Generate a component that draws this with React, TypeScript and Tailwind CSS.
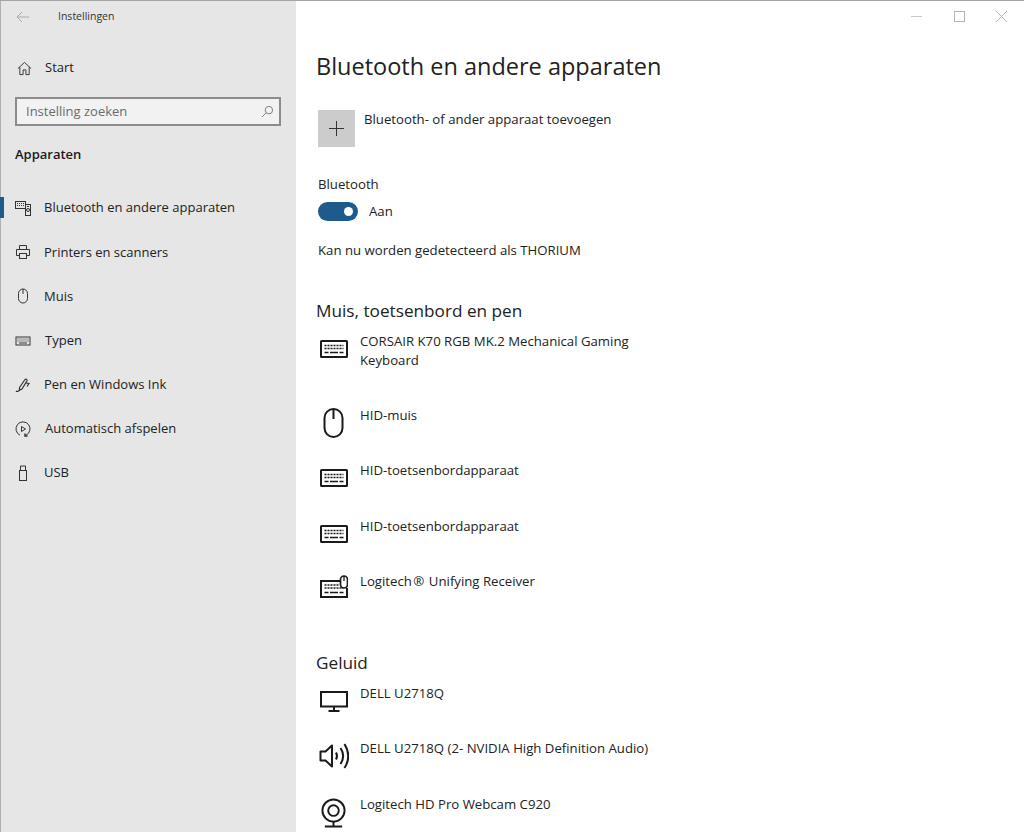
import React from "react";

const font = "font-['Open_Sans',sans-serif]";

type IconProps = { className?: string };

const Keyboard = ({ className = "w-[28px] h-[18px] mt-[4px]" }: IconProps) => (
  <svg viewBox="0 0 28 18" className={className} fill="none" stroke="#1a1a1a">
    <rect x="1" y="1" width="26" height="16" rx="0.500" strokeWidth="2" />
    <path d="M4.500 5.500h19M4.500 8.500h19" strokeWidth="1.600" strokeDasharray="2 1" />
    <path d="M4.500 12.500h4M10 12.500h8M19.500 12.500h4" strokeWidth="1.600" />
  </svg>
);

const KeyboardMouse = () => (
  <svg viewBox="0 0 28 23" className="w-[28px] h-[23px] -mt-px" fill="none" stroke="#1a1a1a">
    <path d="M20 6H1v16h26V13" strokeWidth="2" />
    <path d="M4.500 10h14M4.500 13h19" strokeWidth="1.600" strokeDasharray="2 1" />
    <path d="M4.500 17.500h4M10 17.500h8M19.500 17.500h4" strokeWidth="1.600" />
    <rect x="20.500" y="1" width="7" height="12" rx="3.500" fill="white" strokeWidth="1.700" />
    <path d="M24 1v5" strokeWidth="1.300" />
  </svg>
);

const Mouse = ({ className = "w-[21px] h-[30px] -mt-[2px]" }: IconProps) => (
  <svg viewBox="0 0 21 30" className={className} fill="none" stroke="#1a1a1a" strokeWidth="2">
    <rect x="1.500" y="1" width="18" height="28" rx="9" />
    <path d="M10.500 1v10" />
  </svg>
);

const Monitor = () => (
  <svg viewBox="0 0 28 21" className="w-[28px] h-[21px] mt-[3px]" fill="none" stroke="#1a1a1a" strokeWidth="2">
    <rect x="1" y="1" width="26" height="14.500" />
    <path d="M14 15.500v4.500M8.500 20h11" />
  </svg>
);

const Speaker = () => (
  <svg viewBox="0 0 30 26" className="w-[30px] h-[26px]" fill="none" stroke="#1a1a1a" strokeWidth="2">
    <path d="M1.500 8.500h5l6.500-6v21l-6.500-6h-5z" strokeLinejoin="round" />
    <path d="M17 9.500c1.300 2.300 1.300 4.700 0 7" />
    <path d="M21.500 5c3.300 5 3.300 11 0 16" />
    <path d="M25.500 1c5 8 5 16 0 24" />
  </svg>
);

const Webcam = () => (
  <svg viewBox="0 0 28 30" className="w-[27px] h-[30px] -mt-px" fill="none" stroke="#1a1a1a" strokeWidth="2">
    <circle cx="14" cy="12.500" r="11.500" />
    <circle cx="14" cy="12.500" r="5.500" />
    <path d="M14 24v5M5 29h18" />
  </svg>
);

const navIcons: React.ReactNode[] = [
  <svg key="bt" viewBox="0 0 16 16" className="w-4 h-4" fill="none" stroke="#333" strokeWidth="1">
    <rect x="0.500" y="1.500" width="10" height="7" />
    <path d="M2 3.500h7M2 5.500h7" strokeDasharray="1 1" />
    <rect x="10.500" y="4.500" width="5" height="11" fill="#e6e6e6" />
    <circle cx="13" cy="10" r="1.500" />
    <path d="M12 6.500h2" />
  </svg>,
  <svg key="pr" viewBox="0 0 16 16" className="w-4 h-4" fill="none" stroke="#333" strokeWidth="1">
    <path d="M4.500 5V1.500h7V5M4.500 11.500h-3V5.500h13v6h-3" />
    <rect x="4.500" y="9.500" width="7" height="5" />
  </svg>,
  <svg key="mu" viewBox="0 0 16 16" className="w-4 h-4" fill="none" stroke="#333" strokeWidth="1">
    <rect x="3.500" y="1" width="9" height="14" rx="4.500" />
    <path d="M8 1v5" />
  </svg>,
  <svg key="ty" viewBox="0 0 16 16" className="w-4 h-4" fill="none" stroke="#333" strokeWidth="1">
    <rect x="1" y="4" width="14" height="8" />
    <path d="M2.500 6h11M2.500 8h11" strokeDasharray="1 1" />
    <path d="M4 10h8" />
  </svg>,
  <svg key="pe" viewBox="0 0 16 16" className="w-4 h-4" fill="none" stroke="#333" strokeWidth="1.200">
    <path d="M4.500 10.500 10 2.500c.8-1 2.500 0 2 1.200L7 12l-2.500 1z" />
    <path d="M4.500 13c-1 1.800-3 1.500-3.500 1M11 6l3 .5-2 3" />
  </svg>,
  <svg key="au" viewBox="0 0 16 16" className="w-4 h-4" fill="none" stroke="#333" strokeWidth="1">
    <path d="M5 14.200A7 7 0 1 1 11 14.200" />
    <path d="M6.500 5.500v5l4-2.500z" />
    <path d="M10 12.500v2.500h2.500" strokeWidth="1.500" />
  </svg>,
  <svg key="us" viewBox="0 0 16 16" className="w-4 h-4" fill="none" stroke="#333" strokeWidth="1">
    <rect x="4.500" y="5.500" width="7" height="10" />
    <path d="M5.500 5.500V1h5v4.500" />
  </svg>,
];

const navItems = [
  "Bluetooth en andere apparaten",
  "Printers en scanners",
  "Muis",
  "Typen",
  "Pen en Windows Ink",
  "Automatisch afspelen",
  "USB",
];

const inputDevices: { icon: React.ReactNode; label: string; tall?: boolean }[] = [
  { icon: <Keyboard />, label: "CORSAIR K70 RGB MK.2 Mechanical Gaming Keyboard", tall: true },
  { icon: <Mouse />, label: "HID-muis" },
  { icon: <Keyboard />, label: "HID-toetsenbordapparaat" },
  { icon: <Keyboard />, label: "HID-toetsenbordapparaat" },
  { icon: <KeyboardMouse />, label: "Logitech\u200a®\u200a Unifying Receiver" },
];

const audioDevices = [
  { icon: <Monitor />, label: "DELL U2718Q" },
  { icon: <Speaker />, label: "DELL U2718Q (2- NVIDIA High Definition Audio)" },
  { icon: <Webcam />, label: "Logitech HD Pro Webcam C920" },
];

const DeviceRow = ({ icon, label, tall }: { icon: React.ReactNode; label: string; tall?: boolean }) => (
  <div className={`flex ${tall ? "h-[74px]" : "h-[55.500px]"}`}>
    <div className="w-[42px] shrink-0 flex justify-center items-start pt-[4px] pr-[11px]">{icon}</div>
    <div className="w-[300px] text-[13.200px] leading-[19px] text-[#222]">{label}</div>
  </div>
);

export default function App() {
  return (
    <div className={`${font} w-[1024px] h-[832px] overflow-hidden flex bg-white border-t border-[#a3a3a3]`}>
      <aside className="w-[296px] shrink-0 h-full bg-[#e6e6e6] border-l border-[#b0b0b0]">
        <div className="h-[31px] flex items-center pl-[15px]">
          <svg viewBox="0 0 14 12" className="w-[14px] h-3" fill="none" stroke="#aaa" strokeWidth="1">
            <path d="M13 6H1M6 1 1 6l5 5" />
          </svg>
          <span className="ml-[28px] text-[10.500px] text-[#333]">Instellingen</span>
        </div>
        <div className="h-[44px] mt-[14px] flex items-center pl-[16px]">
          <svg viewBox="0 0 16 16" className="w-[15px] h-[15px]" fill="none" stroke="#333" strokeWidth="1">
            <path d="M1 8 8 1.500 15 8M3 6.500V14.500h3.500v-5h3v5H13V6.500" />
          </svg>
          <span className="ml-[13px] text-[13px] text-[#222]">Start</span>
        </div>
        <div className="ml-[14px] mr-[15px] mt-[7px] h-[29px] bg-[#f2f2f2] border-2 border-[#8c8c8c] flex items-center justify-between pl-[9px] pr-[5px]">
          <span className="text-[13px] text-[#6b6b6b]">Instelling zoeken</span>
          <svg viewBox="0 0 14 14" className="w-[13px] h-[13px]" fill="none" stroke="#777" strokeWidth="1">
            <circle cx="8.500" cy="5.500" r="4" />
            <path d="M5.500 8.500 1 13" />
          </svg>
        </div>
        <div className="ml-[14px] mt-[19px] text-[13px] leading-[19px] font-semibold text-[#1a1a1a]">Apparaten</div>
        <nav className="mt-[22px]">
          {navItems.map((item, i) => (
            <div key={item} className="relative h-[44.200px] flex items-center pl-[14px]">
              {i === 0 && <div className="absolute -left-px top-[11px] w-[4px] h-[21px] bg-[#1f5a8c]" />}
              {navIcons[i]}
              <span className={`${i === 3 || i === 5 ? "ml-[14px]" : "ml-[13px]"} text-[13px] text-[#222]`}>{item}</span>
            </div>
          ))}
        </nav>
      </aside>
      <main className="relative flex-1 pl-[20px]">
        <div className="absolute top-[10px] right-[17px] flex items-center gap-[31.500px]">
          <svg viewBox="0 0 11 11" className="w-[11px] h-[11px]" fill="none" stroke="#c8c8c8"><path d="M0 5.500h11" /></svg>
          <svg viewBox="0 0 11 11" className="w-[11px] h-[11px]" fill="none" stroke="#b5b5b5"><rect x="0.500" y="0.500" width="10" height="10" /></svg>
          <svg viewBox="0 0 11 11" className="w-[11px] h-[11px]" fill="none" stroke="#b5b5b5"><path d="m0 0 11 11M11 0 0 11" /></svg>
        </div>
        <h1 className="mt-[46px] text-[23.500px] leading-[38px] text-[#222]">Bluetooth en andere apparaten</h1>
        <div className="mt-[25px] ml-[2px] flex">
          <div className="w-[37px] h-[37px] bg-[#cccccc] flex items-center justify-center">
            <svg viewBox="0 0 15 15" className="w-[15px] h-[15px]" fill="none" stroke="#333"><path d="M7.500 0v15M0 7.500h15" /></svg>
          </div>
          <span className="ml-[9px] text-[13.200px] leading-[19px] text-[#222]">Bluetooth- of ander apparaat toevoegen</span>
        </div>
        <div className="mt-[28px] ml-[2px] text-[13.200px] leading-[19px] text-[#222]">Bluetooth</div>
        <div className="mt-[8px] ml-[2px] flex items-center">
          <div className="w-[40px] h-[19px] rounded-full bg-[#1f5a8c] flex items-center justify-end pr-[5px]">
            <div className="w-[9px] h-[9px] rounded-full bg-white" />
          </div>
          <span className="ml-[11px] text-[13.200px] text-[#222]">Aan</span>
        </div>
        <div className="mt-[19px] ml-[2px] text-[13.200px] leading-[19px] text-[#222]">Kan nu worden gedetecteerd als THORIUM</div>
        <h2 className="mt-[39px] text-[17.200px] leading-[24px] text-[#222]">Muis, toetsenbord en pen</h2>
        <div className="mt-[9px] ml-[2px]">
          {inputDevices.map((d, i) => (
            <DeviceRow key={i} {...d} />
          ))}
        </div>
        <h2 className="mt-[23px] text-[17.200px] leading-[24px] text-[#222]">Geluid</h2>
        <div className="mt-[9px] ml-[2px]">
          {audioDevices.map((d, i) => (
            <DeviceRow key={i} {...d} />
          ))}
        </div>
      </main>
    </div>
  );
}
